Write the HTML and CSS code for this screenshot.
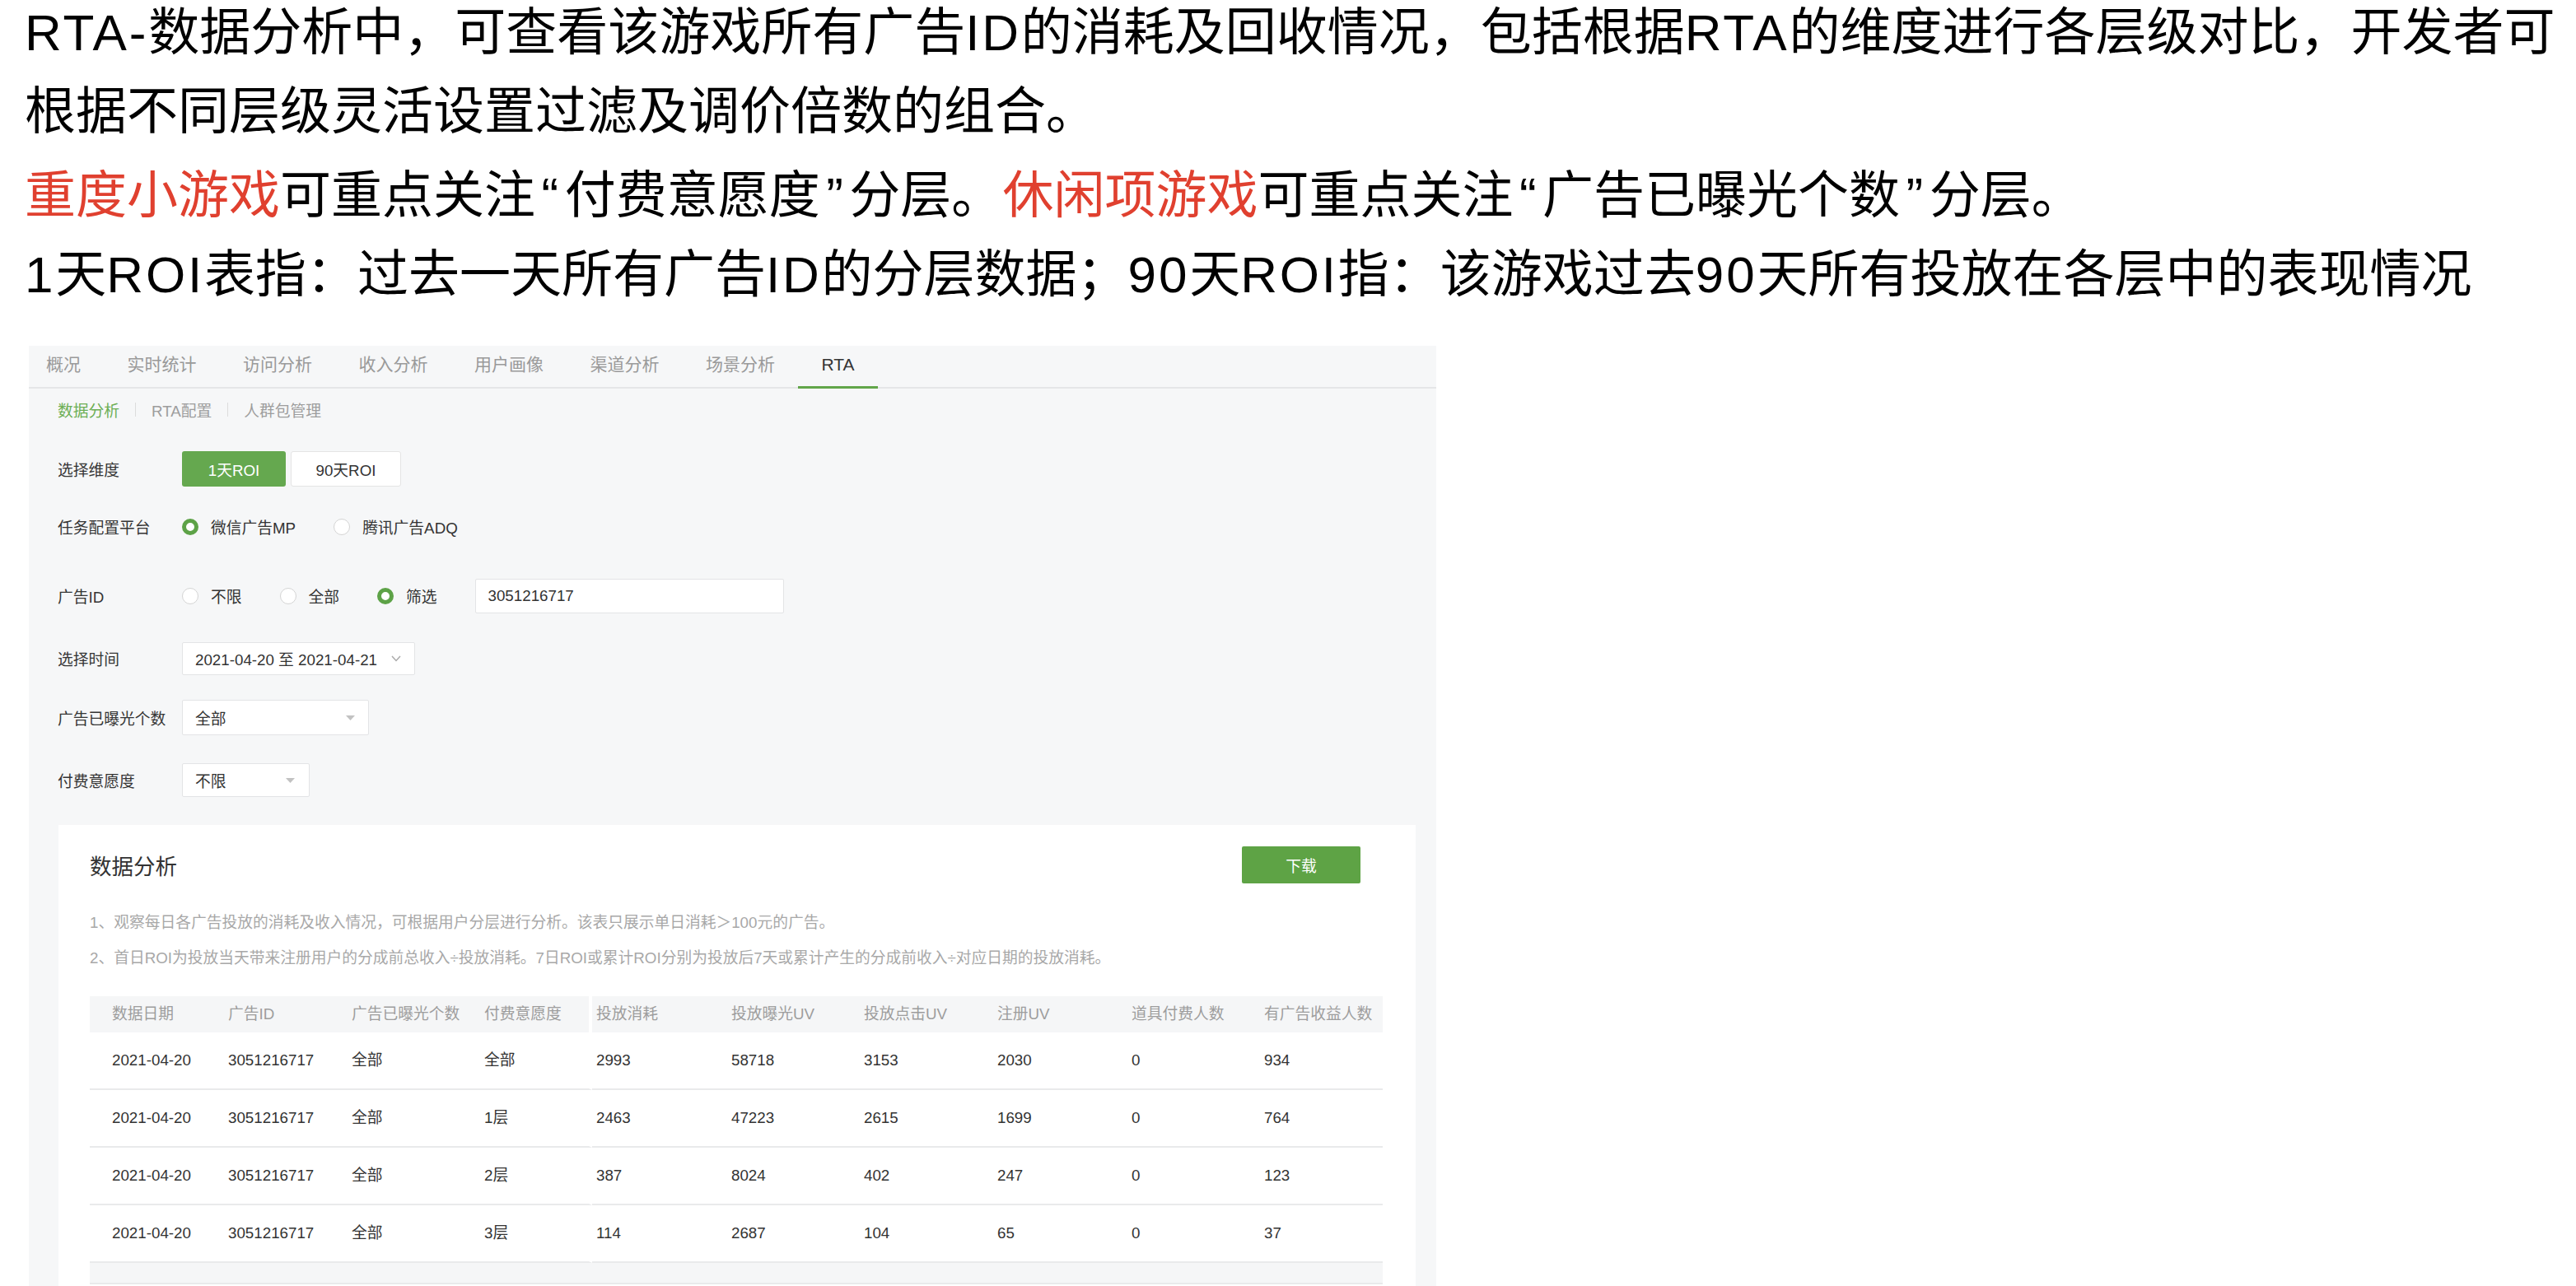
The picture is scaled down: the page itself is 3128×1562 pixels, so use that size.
FILE: index.html
```html
<!DOCTYPE html>
<html lang="zh-CN">
<head>
<meta charset="utf-8">
<title>RTA 数据分析</title>
<link rel="stylesheet" href="styles.css">
</head>
<body>
<div class="intro">
  <p><span class="lat">RTA-</span>数据分析中，可查看该游戏所有广告<span class="lat">ID</span>的消耗及回收情况，包括根据<span class="lat">RTA</span>的维度进行各层级对比，开发者可<br>根据不同层级灵活设置过滤及调价倍数的组合。</p>
  <p class="p2"><span class="red">重度小游戏</span>可重点关注<span class="q">“</span>付费意愿度<span class="q">”</span>分层。<span class="red">休闲项游戏</span>可重点关注<span class="q">“</span>广告已曝光个数<span class="q">”</span>分层。</p>
  <p><span class="lat">1</span>天<span class="lat">ROI</span>表指：过去一天所有广告<span class="lat">ID</span>的分层数据；<span class="lat">90</span>天<span class="lat">ROI</span>指：该游戏过去<span class="lat">90</span>天所有投放在各层中的表现情况</p>
</div>

<div class="panel">
  <div class="tabs">
    <span class="tab">概况</span>
    <span class="tab">实时统计</span>
    <span class="tab">访问分析</span>
    <span class="tab">收入分析</span>
    <span class="tab">用户画像</span>
    <span class="tab">渠道分析</span>
    <span class="tab">场景分析</span>
    <span class="tab active">RTA</span>
  </div>

  <div class="subnav">
    <span class="on">数据分析</span>
    <span class="sep"></span>
    <span>RTA配置</span>
    <span class="sep"></span>
    <span>人群包管理</span>
  </div>

  <div class="form">
    <div class="row t26">
      <span class="label">选择维度</span>
      <span class="seg on">1天ROI</span>
      <span class="seg off">90天ROI</span>
    </div>
    <div class="row t27">
      <span class="label">任务配置平台</span>
      <span class="radio"><span class="dot on"></span>微信广告MP</span>
      <span class="radio"><span class="dot"></span>腾讯广告ADQ</span>
    </div>
    <div class="row t42">
      <span class="label">广告ID</span>
      <span class="radio"><span class="dot"></span>不限</span>
      <span class="radio"><span class="dot"></span>全部</span>
      <span class="radio"><span class="dot on"></span>筛选</span>
      <span class="input">3051216717</span>
    </div>
    <div class="row t33">
      <span class="label">选择时间</span>
      <span class="box date">2021-04-20 至 2021-04-21
        <svg class="chev" width="12" height="8" viewBox="0 0 12 8"><polyline points="1,1 6,6.5 11,1" fill="none" stroke="#a9a9a9" stroke-width="1.4"/></svg>
      </span>
    </div>
    <div class="row t29">
      <span class="label">广告已曝光个数</span>
      <span class="box sel1">全部
        <svg class="caret" width="11" height="6" viewBox="0 0 11 6"><polygon points="0,0 11,0 5.5,6" fill="#c2c2c2"/></svg>
      </span>
    </div>
    <div class="row t33">
      <span class="label">付费意愿度</span>
      <span class="box sel2">不限
        <svg class="caret" width="11" height="6" viewBox="0 0 11 6"><polygon points="0,0 11,0 5.5,6" fill="#c2c2c2"/></svg>
      </span>
    </div>
  </div>

  <div class="card">
    <div class="card-head">
      <span class="card-title">数据分析</span>
      <span class="dl">下载</span>
    </div>
    <p class="note">1、观察每日各广告投放的消耗及收入情况，可根据用户分层进行分析。该表只展示单日消耗＞100元的广告。</p>
    <p class="note">2、首日ROI为投放当天带来注册用户的分成前总收入÷投放消耗。7日ROI或累计ROI分别为投放后7天或累计产生的分成前收入÷对应日期的投放消耗。</p>

    <table class="grid">
      <colgroup>
        <col class="c1"><col class="c2"><col class="c3"><col class="c4"><col class="c5">
        <col class="c6"><col class="c7"><col class="c8"><col class="c9"><col class="c10">
      </colgroup>
      <thead>
        <tr>
          <th>数据日期</th><th>广告ID</th><th>广告已曝光个数</th><th class="fix">付费意愿度</th><th class="after">投放消耗</th>
          <th>投放曝光UV</th><th>投放点击UV</th><th>注册UV</th><th>道具付费人数</th><th>有广告收益人数</th>
        </tr>
      </thead>
      <tbody>
        <tr>
          <td>2021-04-20</td><td>3051216717</td><td>全部</td><td class="fix">全部</td><td class="after">2993</td>
          <td>58718</td><td>3153</td><td>2030</td><td>0</td><td>934</td>
        </tr>
        <tr>
          <td>2021-04-20</td><td>3051216717</td><td>全部</td><td class="fix">1层</td><td class="after">2463</td>
          <td>47223</td><td>2615</td><td>1699</td><td>0</td><td>764</td>
        </tr>
        <tr>
          <td>2021-04-20</td><td>3051216717</td><td>全部</td><td class="fix">2层</td><td class="after">387</td>
          <td>8024</td><td>402</td><td>247</td><td>0</td><td>123</td>
        </tr>
        <tr>
          <td>2021-04-20</td><td>3051216717</td><td>全部</td><td class="fix">3层</td><td class="after">114</td>
          <td>2687</td><td>104</td><td>65</td><td>0</td><td>37</td>
        </tr>
      </tbody>
    </table>
    <div class="grid-foot"></div>
  </div>
</div>
</body>
</html>
```

FILE: styles.css
```css
html, body {
  margin: 0;
  padding: 0;
  background: #ffffff;
}

body {
  font-family: "Liberation Sans", "Noto Sans CJK SC", sans-serif;
  color: #000;
}

/* ---------- intro text ---------- */
.intro {
  margin-top: -8px;
  padding-left: 30px;
  font-size: 62px;
  line-height: 96px;
  color: #000;
}

.intro p {
  margin: 0;
  white-space: nowrap;
}

.intro .p2 {
  margin-top: 6px;
}

.intro .lat {
  letter-spacing: 2.8px;
}

.intro .q {
  margin: 0 7.5px;
}

.red {
  color: #e0402f;
}

/* ---------- panel ---------- */
.panel {
  margin: 38px 0 0 35px;
  width: 1709px;
  background: #f6f7f8;
  padding-bottom: 40px;
}

.tabs {
  display: flex;
  align-items: flex-start;
  height: 50px;
  padding-left: 21px;
  border-bottom: 2px solid #e5e6e8;
}

.tab {
  box-sizing: border-box;
  height: 50px;
  line-height: 46px;
  padding: 0 28.25px;
  font-size: 21px;
  color: #9a9a9a;
  white-space: nowrap;
}

.tab:first-child {
  padding-left: 0;
}

.tab.active {
  height: 52px;
  color: #353535;
  border-bottom: 3px solid #62a64a;
}

.subnav {
  display: flex;
  align-items: center;
  height: 50px;
  padding-left: 35px;
  font-size: 18.75px;
  color: #9d9d9d;
}

.subnav .on {
  color: #6cae54;
}

.subnav .sep {
  width: 1px;
  height: 17px;
  background: #dcdcdc;
  margin: 0 19px;
}

/* ---------- form ---------- */
.form {
  padding-left: 35px;
}

.row {
  display: flex;
  align-items: center;
  height: 43px;
  font-size: 18.75px;
  color: #333;
}

.t26 { margin-top: 26px; }
.t27 { margin-top: 27px; }
.t42 { margin-top: 41px; }
.t33 { margin-top: 33px; }
.t29 { margin-top: 29px; }

.label {
  width: 151px;
  flex: none;
  color: #353535;
  white-space: nowrap;
}

.seg {
  box-sizing: border-box;
  height: 43px;
  display: flex;
  align-items: center;
  justify-content: center;
  border-radius: 3px;
}

.seg.on {
  width: 126px;
  background: #65a84f;
  color: #fff;
}

.seg.off {
  width: 134px;
  margin-left: 6px;
  background: #fff;
  border: 1px solid #e4e4e4;
  color: #333;
}

.radio {
  display: flex;
  align-items: center;
  margin-right: 46px;
  white-space: nowrap;
}

.radio:first-of-type {
  margin-left: 1px;
}

.dot {
  box-sizing: border-box;
  width: 20px;
  height: 20px;
  border-radius: 50%;
  border: 1.5px solid #d4d4d4;
  background: #fff;
  margin-right: 15px;
  flex: none;
}

.dot.on {
  border: 5.5px solid #5da247;
}

.input {
  box-sizing: border-box;
  width: 375px;
  height: 42px;
  display: flex;
  align-items: center;
  padding-left: 15px;
  background: #fff;
  border: 1px solid #e3e4e6;
  border-radius: 2px;
  color: #333;
}

.box {
  box-sizing: border-box;
  display: flex;
  align-items: center;
  justify-content: space-between;
  background: #fff;
  border: 1px solid #e3e4e6;
  border-radius: 2px;
  color: #333;
  white-space: nowrap;
}

.date {
  width: 283px;
  height: 40px;
  padding: 0 16px 0 15px;
}

.sel1 {
  width: 227px;
  height: 43px;
  padding: 0 16px 0 15px;
}

.sel2 {
  width: 155px;
  height: 41px;
  padding: 0 17px 0 15px;
}

/* ---------- card ---------- */
.card {
  margin: 33px 25px 0 36px;
  background: #fff;
  padding: 26px 40px 40px 38px;
}

.card-head {
  display: flex;
  align-items: center;
  justify-content: space-between;
  height: 45px;
}

.card-title {
  font-size: 26.5px;
  color: #333;
}

.dl {
  width: 144px;
  height: 45px;
  margin-right: 27px;
  display: flex;
  align-items: center;
  justify-content: center;
  background: #5ea345;
  color: #fff;
  font-size: 18.75px;
  border-radius: 2px;
}

.note {
  margin: 0;
  font-size: 18.75px;
  line-height: 43px;
  color: #a8a8a8;
  white-space: nowrap;
}

.card-head + .note {
  margin-top: 26px;
}

/* ---------- table ---------- */
.grid {
  margin-top: 25px;
  width: 1570px;
  table-layout: fixed;
  border-collapse: separate;
  border-spacing: 0;
  font-size: 18.75px;
}

.c1 { width: 168px; }
.c2 { width: 150px; }
.c3 { width: 161px; }
.c4 { width: 131px; }
.c5 { width: 169px; }
.c6 { width: 161px; }
.c7 { width: 162px; }
.c8 { width: 163px; }
.c9 { width: 161px; }
.c10 { width: 144px; }

.grid th,
.grid td {
  padding: 0;
  text-align: left;
  white-space: nowrap;
}

.grid th {
  line-height: 44px;
  background: #f5f6f7;
  color: #9d9d9d;
  font-weight: normal;
}

.grid td {
  line-height: 68px;
  border-bottom: 2px solid #e9eaeb;
  color: #333;
}

.grid th:first-child,
.grid td:first-child {
  padding-left: 27px;
}

.grid .fix {
  border-right: 4px solid #fff;
}

.grid .after {
  padding-left: 5px;
}

.grid-foot {
  height: 24px;
  background: #f5f6f7;
  border-bottom: 2px solid #e9eaeb;
}
```
